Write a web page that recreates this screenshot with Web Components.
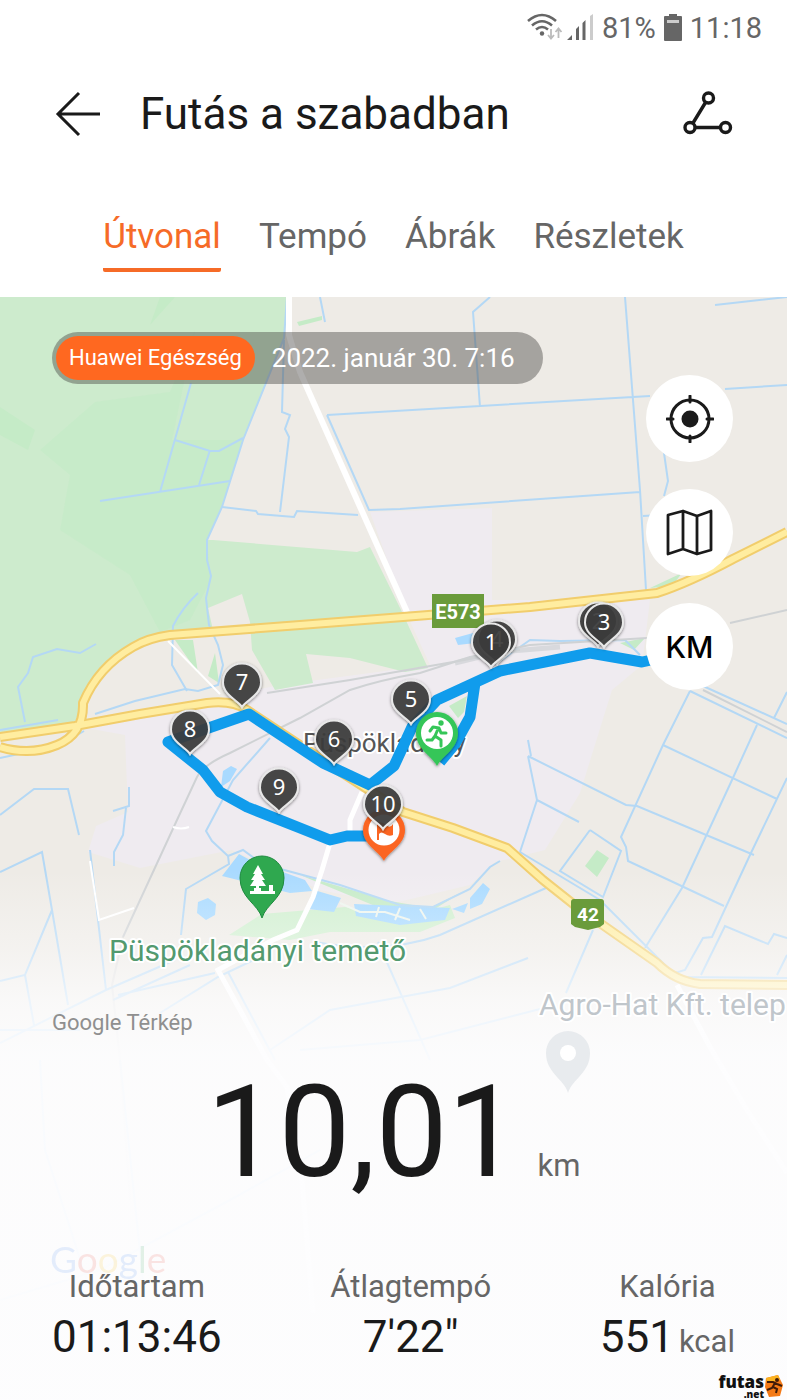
<!DOCTYPE html>
<html lang="hu">
<head>
<meta charset="utf-8">
<meta name="viewport" content="width=device-width, initial-scale=1">
<title>Futás a szabadban</title>
<style>
  html, body { margin: 0; }
  body { font-family: Roboto, "Liberation Sans", sans-serif; color: #1a1a1a; background: #fff; }
</style>
</head>
<body>
<workout-page></workout-page>

<template id="status-bar">
  <style>
    :host { display: flex; justify-content: flex-end; align-items: center; gap: 7px; height: 56px; padding: 0 25px; color: #666; font-size: 29px; line-height: 36px; }
    svg { display: block; flex: none; }
  </style>
  <svg width="68" height="30" viewBox="526 12 68 30" fill="none" stroke="#666" stroke-width="2.6" aria-label="Wi-Fi és mobil jel">
    <path d="M527 20Q541 8 555 20M531 24.500Q541 16 551 24.500M535 28.500Q541 23.500 547 28.500"/>
    <circle cx="541" cy="32.500" r="2.200" fill="#666" stroke="none"/>
    <path d="M550 28v9m-3-3 3 3.500 3-3.500M557.500 37v-9m-3 3 3-3.500 3 3.500" stroke="#bbb" stroke-width="1.800"/>
    <path d="M566 39l5-5v5zM575 28l3-3v14h-3zM581.500 22l3-3v20h-3z" fill="#666" stroke="none"/>
    <path d="M589 15l3-2v26h-3z" fill="#ccc" stroke="none"/>
  </svg>
  <span>81%</span>
  <svg width="20" height="28" viewBox="0 0 20 28" aria-label="Akkumulátor"><path d="M6 0h8v2h4q1 0 1 1v23q0 1-1 1H2q-1 0-1-1V3q0-1 1-1h4z" fill="#666"/><path d="M4 6h12v3H4z" fill="#ccc"/></svg>
  <span>11:18</span>
</template>

<template id="app-bar">
  <style>
    :host { display: flex; align-items: center; gap: 36px; height: 116px; padding: 0 53px 0 52px; }
    h1 { flex: 1; margin: 0; font-size: 44px; line-height: 56px; font-weight: 400; white-space: nowrap; }
    button { display: block; flex: none; border: 0; padding: 0; background: none; }
    svg { display: block; }
  </style>
  <button type="button" aria-label="Vissza"><svg width="52" height="52" viewBox="0 0 52 52" fill="none" stroke="#1a1a1a" stroke-width="3"><path d="M48 26H6M27 5 6 26l21 21"/></svg></button>
  <h1><slot></slot></h1>
  <button type="button" aria-label="Útvonal megosztása"><svg width="52" height="52" viewBox="682 88 52 52" fill="none" stroke="#1a1a1a" stroke-width="3.400"><circle cx="708.500" cy="98" r="5"/><circle cx="690" cy="127.500" r="5"/><circle cx="725.500" cy="127.500" r="5"/><path d="M705.500 102.500 693 123M695 127.500h25"/></svg></button>
</template>

<template id="page-tabs">
  <style>
    :host { display: flex; justify-content: center; gap: 38px; padding: 41px 0 25px; }
  </style>
  <slot></slot>
</template>

<template id="page-tab">
  <style>
    :host { display: block; }
    button { display: block; border: 0; border-bottom: 4px solid transparent; border-radius: 2px; margin: 0; padding: 0 0 7px; background: none; font: inherit; font-size: 35px; line-height: 48px; color: #666; white-space: nowrap; }
    :host([selected]) button { color: #f66b27; border-color: #f66b27; }
  </style>
  <button type="button" role="tab"><slot></slot></button>
</template>

<template id="source-chip">
  <style>
    :host { display: flex; align-items: center; gap: 17px; padding: 4px 28px 4px 4px; border-radius: 26px; background: rgba(70, 68, 66, .43); color: #fff; font-size: 26px; line-height: 44px; white-space: nowrap; }
    b { padding: 0 13px; border-radius: 22px; background: #ff6820; font-size: 22px; font-weight: 400; }
  </style>
  <b><slot name="source"></slot></b><slot></slot>
</template>

<template id="round-button">
  <style>
    :host { display: block; }
    button { display: grid; place-items: center; width: 87px; height: 87px; border: 0; border-radius: 50%; margin: 0; padding: 0; background: #fff; color: #000; font: 500 30px/40px Inter, Roboto, sans-serif; }
  </style>
  <button type="button"><slot></slot></button>
</template>

<template id="stat-item">
  <style>
    :host { display: grid; gap: 6px; justify-items: center; white-space: nowrap; }
    .label, small { font-size: 31px; line-height: 36px; color: #666; }
    .value { font-size: 44px; line-height: 52px; }
    small { margin-left: 5px; }
    small[hidden] { display: none; }
  </style>
  <span class="label"><slot name="label"></slot></span>
  <span class="value"><slot></slot><small><slot name="unit"></slot></small></span>
</template>

<template id="route-map">
  <style>
    :host { display: block; }
    svg { display: block; width: 100%; height: 100%; }
    text { font-family: Roboto, sans-serif; }
    .pin text { font: 22px "Noto Sans", Roboto, sans-serif; fill: #fff; text-anchor: middle; }
    .halo { paint-order: stroke; stroke: #fff; stroke-width: 4px; stroke-linejoin: round; }
  </style>
  <svg viewBox="0 297 787 1103" preserveAspectRatio="xMidYMid slice" role="img" aria-label="A futás útvonala a térképen">
    <defs>
      <linearGradient id="fade" gradientUnits="userSpaceOnUse" x1="0" y1="870" x2="0" y2="1400">
        <stop offset="0" stop-color="#fdfdfe" stop-opacity="0"/>
        <stop offset=".15" stop-color="#fdfdfe" stop-opacity=".4"/>
        <stop offset=".25" stop-color="#fdfdfe" stop-opacity=".76"/>
        <stop offset=".35" stop-color="#fdfdfe" stop-opacity=".93"/>
        <stop offset="1" stop-color="#fdfdfe" stop-opacity=".98"/>
      </linearGradient>
      <filter id="shade" x="-30%" y="-30%" width="160%" height="160%"><feDropShadow dx="0" dy="1" stdDeviation="1.500" flood-opacity=".5"/></filter>
      <path id="drop" d="M0 0C-3-6-19-12-19-24.500A19 19 0 0 1 19-24.500C19-12 3-6 0 0Z" fill="#3c3c3c" fill-opacity=".88" stroke="#e8e8e8" stroke-width="2"/>
      <path id="place" d="M0 0C-4-14-22-20-22-40A22 22 0 0 1 22-40C22-20 4-14 0 0Z"/>
      <path id="main-roads" d="M0 747Q30 756 57 745T83 703Q98 667 133 647 148 638 170 635L300 625 403 617 530 607 657 593Q690 582 733 559L787 532M0 737 75 726 140 714 207 703Q233 700 247 710L330 765 403 812 453 828 507 848 543 880 577 907 657 963Q675 981 700 984L787 985"/>
    </defs>
    <path fill="#eeebe6" d="M0 297h787v1103H0z"/>
    <path fill="#efebf0" d="M370 512 492 508V600L650 600 642 665 612 690 580 793 545 850 495 862 470 885 390 904 320 890 232 850 140 868 88 852 96 826 128 812 125 735 75 726 207 700 280 685 430 665 405 610Z"/>
    <path fill="#cdebcd" d="M0 297H287L284 338 243 440 222 507 207 540 213 540 357 552 370 547 402 612 428 668 405 672 350 658 306 654 313 683 275 690 252 650 250 622 242 594 208 608 213 630 165 636Q100 650 75 722L0 735Z"/>
    <g fill="#c5ebc7">
      <path d="M95 402 170 392 195 330 172 440 243 440 222 507 207 540 211 580 190 620 160 632 130 575 60 530 70 475 40 450Z" opacity=".7"/>
      <path d="M0 407 35 430 28 450 0 435ZM160 297H175L150 325ZM297 322 322 316 322 320 299 326Z"/>
      <path d="M175 640 193 640 198 673ZM215 653 219 683 208 676Z"/>
      <path d="M449 706 467 696 464 712 458 718ZM620 643 645 638 634 650ZM650 588 682 573 672 586ZM597 850 609 858 597 877 585 866Z"/>
      <path d="M229 935 262 914 345 907 400 918 450 905 455 918 420 932 330 932 290 940Z" fill="#d0efcf"/>
      <path d="M300 875 390 901 430 908 462 892 430 912 380 908Z"/>
    </g>
    <g fill="#a9daff">
      <path d="M239 854 250 860 305 880 312 891 290 893 222 876ZM314 890 341 898 334 912 308 909ZM354 904 450 908 445 920 400 925 356 916ZM452 909 468 903 464 913ZM470 898 483 883 490 889 482 904 470 909ZM198 902 208 898 216 904 215 915 206 920 197 913ZM223 771 231 766 237 769 230 781 221 787Z"/>
      <path d="M455 638 473 633 475 643 458 645Z"/>
    </g>
    <path d="M340 903 360 912 385 912 410 920M376 917 379 907M395 920 400 908M426 919 420 909" fill="none" stroke="#eef5ee" stroke-width="2"/>
    <g fill="none" stroke="#b4d8f5" stroke-width="2">
      <path d="M287 297 284 338 243 440 222 507 207 540 207 560 211 576 206 598 209 625 218 645 223 665 218 685 198 691 185 689 135 701 95 714"/>
      <path d="M191 383 160 492M175 440 210 451H219L243 438M210 450 199 485M100 501 230 481M222 507 256 511 258 514 294 517 297 511 358 515M280 512 289 437 285 429 290 415 282 412 284 340M320 297 325 322"/>
      <path d="M625 297 640 490 646 590M660 515 643 516M490 297 473 312 480 407M327 415 650 396M725 389 787 385M327 415 369 510 400 509 640 492M715 305 787 297M664 453 668 481 664 496"/>
      <path d="M198 593Q182 608 173 626L172 665 187 691M96 644 80 653 57 649 33 657 28 673 18 687 25 722M0 730 58 720M0 758 60 745 84 731"/>
      <path d="M0 815 34 789H68L79 835M129 787V806L113 811M126 808 123 835 114 852V866M270 738 233 780 206 831 212 841 228 856 229 864 186 889 181 935M228 856 243 850 262 864 340 885 400 905 433 907 470 889 490 867 500 861"/>
      <path d="M0 872 42 852 52 910 68 1005M52 910 25 975 0 981M25 975 34 1025M90 850 106 990M0 1043 106 990 175 960M113 1000 190 965M118 995 215 973M0 1030 80 1030M160 1013 218 977 262 956M228 972 275 1060M270 1050 330 1010 390 999 450 988 528 958M315 942Q385 955 440 935L546 888"/>
      <path d="M690 691 663 745 621 837 626 847 628 861 673 882 724 906M500 661 530 640 560 641 625 640 640 655"/>
      <path d="M528 756 626 805 637 806 754 855M528 756 537 800 520 852M537 800 579 822M663 745 777 799M757 725 732 780 682 888 645 948M787 778 750 855 712 937 703 938 685 970 675 973M690 691 787 738M703 686 787 724M787 692 774 718"/>
      <path d="M590 830 621 851 603 897 560 871 590 830M520 852 600 900 677 977 787 978M593 930 566 993M701 975 725 926 768 944 774 934 787 938M777 975 787 955M531 756 528 740M378 942 430 1060M300 1050 420 1040 540 1009M0 1300 100 1270 230 1200 320 1150M40 1060 45 1150 90 1290M120 1060 145 1300"/>
    </g>
    <g fill="none" stroke="#cfd2d4" stroke-width="2">
      <path d="M123 937 177 820 197 777Q203 765 230 753L300 718 350 690Q380 680 420 673L470 657 530 645 647 638M730 623 787 610M267 693 350 680 453 662 520 650M703 690 787 732"/>
      <path d="M455 663 500 652 560 647" stroke-width="5" opacity=".7"/>
      <path d="M123 937 112 985 120 1060 130 1200" opacity=".5"/>
    </g>
    <g fill="none" stroke="#fff">
      <path d="M289 297V335L300 372 357 500 407 612" stroke-width="6"/>
      <path d="M362 792 350 820 350 836M330 843 322 870 313 897 297 930 273 940 218 970 240 1010 267 1060 287 1087 302 1180 313 1313" stroke-width="5"/>
      <path d="M677 985 710 1047 747 1110 787 1173" stroke-width="5"/>
      <path d="M168 641 220 694M90 861 99 920 134 908M173 827Q181 830 189 827" stroke-width="2"/>
    </g>
    <g fill="none" stroke-linejoin="round">
      <use href="#main-roads" stroke="#f1cd6c" stroke-width="10"/>
      <use href="#main-roads" stroke="#ffeda0" stroke-width="6"/>
    </g>
    <text class="halo" x="303" y="752" font-size="26" fill="#555">Püspökladány</text>
    <path d="M0 870h787v530H0z" fill="url(#fade)"/>
    <path d="M440 762 455 744 470 717 475 683M665 657 642 662 590 653 500 671 437 700 412 727 394 766 370 785 323 763 270 728 249 714 168 742 203 770 220 792 247 807 300 828 330 840 347 836 385 836" fill="none" stroke="#109cec" stroke-width="11" stroke-linejoin="round"/>
    <path d="M432 594h52v34h-52z" fill="#6a9b3b"/>
    <text x="458" y="619" font-size="20" font-weight="700" fill="#fff" text-anchor="middle">E573</text>
    <path d="M574 899h27q3 0 3 3v22l-4 3-12 3-13-3-4-3v-22q0-3 3-3z" fill="#6a9b3b"/>
    <text x="588" y="921" font-size="19" font-weight="700" fill="#fff" text-anchor="middle">42</text>
    <g transform="translate(262 918)"><use href="#place" fill="#2fa84f" stroke="#1e8b3f"/><path d="M-4-53-9-44h2l-4 6h3l-4 6h6v2h-2v3H-12v3H13v-3H11v-6H7v6H-1v-3h-2v-2H4L0-38H3L-1-44H1z" fill="#fff"/></g>
    <text class="halo" x="109" y="961" font-size="30" fill="#539a6f">Püspökladányi temető</text>
    <g transform="translate(568 1093)"><use href="#place" fill="#e8ebee"/><circle cy="-40" r="8" fill="#fff"/></g>
    <text class="halo" x="539" y="1015" font-size="30" fill="#c0c6cb">Agro-Hat Kft. telep</text>
    <text x="50" y="1273" font-size="37" style="font-family: Lato, sans-serif" opacity=".13"><tspan fill="#4285f4">G</tspan><tspan fill="#ea4335">o</tspan><tspan fill="#fbbc05">o</tspan><tspan fill="#4285f4">g</tspan><tspan fill="#34a853">l</tspan><tspan fill="#ea4335">e</tspan></text>
    <g transform="translate(384 861)"><path d="M0 0C-4-9-21-16-21-31A21 21 0 0 1 21-31C21-16 4-9 0 0Z" fill="#fb6522" filter="url(#shade)"/><circle cy="-31" r="15.500" fill="#fff"/><path d="M-7-21V-38Q-2-40 2-36T9-37V-26Q5-24 1-27T-5-27V-21Z" fill="#fb6522"/></g>
    <g transform="translate(437 766)"><path d="M0 0C-4-9-21-17-21-33A21 21 0 0 1 21-33C21-17 4-9 0 0Z" fill="#35c658" filter="url(#shade)"/><circle cy="-33" r="16" fill="#fff"/><circle cx="4" cy="-43" r="2.700" fill="#35c658"/><path d="M-7-35-4-39 2-38 4-33 9-33M1-37-2-30 4-26 4-20M-2-30-5-26-10-26" fill="none" stroke="#35c658" stroke-width="3" stroke-linecap="round" stroke-linejoin="round"/></g>
    <g class="pin">
      <g transform="translate(497 664)"><use href="#drop" filter="url(#shade)"/><text y="-17">4</text></g>
      <g transform="translate(491 667)"><use href="#drop" filter="url(#shade)"/><text y="-17">1</text></g>
      <g transform="translate(598 646)"><use href="#drop" filter="url(#shade)"/><text y="-17">2</text></g>
      <g transform="translate(604 647)"><use href="#drop" filter="url(#shade)"/><text y="-17">3</text></g>
      <g transform="translate(411 724)"><use href="#drop" filter="url(#shade)"/><text y="-17">5</text></g>
      <g transform="translate(334 764)"><use href="#drop" filter="url(#shade)"/><text y="-17">6</text></g>
      <g transform="translate(242 707)"><use href="#drop" filter="url(#shade)"/><text y="-17">7</text></g>
      <g transform="translate(190 754)"><use href="#drop" filter="url(#shade)"/><text y="-17">8</text></g>
      <g transform="translate(279 812)"><use href="#drop" filter="url(#shade)"/><text y="-17">9</text></g>
      <g transform="translate(383 829)"><use href="#drop" filter="url(#shade)"/><text y="-17">10</text></g>
    </g>
  </svg>
</template>

<template id="site-mark">
  <style>
    :host { display: grid; grid-template-columns: auto 20px; align-items: center; justify-items: end; color: #111; font: 800 17px/16px "Open Sans", sans-serif; }
    small { font-size: 10px; line-height: 8px; }
    svg { grid-column: 2; grid-row: 1 / span 2; display: block; }
  </style>
  <span>futas</span>
  <svg width="20" height="24" viewBox="0 0 20 24"><path d="M2 4 14 1 19 11 16 22 5 23 1 13Z" fill="#f47a16"/><path d="M2 4 14 1 16 6 3 9Z" fill="#fbb321"/><path d="M3 8 9 8 13 10 18 12M11 9 8 14 3 16M9 13 13 15 12 19" fill="none" stroke="#401c08" stroke-width="2"/><circle cx="13" cy="6" r="2" fill="#401c08"/></svg>
  <small>.net</small>
</template>

<template id="workout-page">
  <style>
    :host { display: flex; flex-direction: column; min-height: 100vh; overflow: hidden; }
    main { flex: 1; position: relative; display: flex; flex-direction: column; }
    route-map { position: absolute; inset: 0; z-index: 0; }
    .tools { position: relative; display: flex; justify-content: space-between; align-items: flex-start; padding: 35px 54px 0 52px; }
    .buttons { display: grid; gap: 27px; margin-top: 43px; }
    .summary { position: relative; margin-top: auto; padding: 0 52px 37px; }
    .credit { margin: 0; font-size: 22px; line-height: 26px; color: #8f8f8f; }
    .distance { display: flex; justify-content: center; align-items: baseline; gap: 18px; margin: 17px 0 58px; font-size: 128px; line-height: 158px; }
    .distance small { font-size: 31px; line-height: 36px; color: #666; }
    .stats { display: flex; justify-content: space-between; }
    site-mark { position: absolute; right: 3px; bottom: 2px; }
  </style>
  <status-bar></status-bar>
  <app-bar>Futás a szabadban</app-bar>
  <page-tabs role="tablist"><page-tab selected>Útvonal</page-tab><page-tab>Tempó</page-tab><page-tab>Ábrák</page-tab><page-tab>Részletek</page-tab></page-tabs>
  <main>
    <route-map></route-map>
    <div class="tools">
      <source-chip><span slot="source">Huawei Egészség</span>2022. január 30. 7:16</source-chip>
      <div class="buttons">
        <round-button label="Saját hely"><svg width="48" height="48" viewBox="-24 -24 48 48" fill="none" stroke="#1a1a1a" stroke-width="3" stroke-linecap="round"><circle r="19"/><circle r="8.500" fill="#1a1a1a" stroke="none"/><path d="M0-23v6M0 17v6M-23 0h6M17 0h6"/></svg></round-button>
        <round-button label="Térképtípus"><svg width="48" height="48" viewBox="0 0 48 48" fill="none" stroke="#1a1a1a" stroke-width="2.800" stroke-linejoin="round"><path d="M2 6 17 2 31 7 45 2V41L31 45 17 40 2 45ZM17 2V40M31 7V45"/></svg></round-button>
        <round-button>KM</round-button>
      </div>
    </div>
    <section class="summary">
      <p class="credit">Google Térkép</p>
      <div class="distance"><span>10,01</span><small>km</small></div>
      <div class="stats">
        <stat-item><span slot="label">Időtartam</span>01:13:46</stat-item>
        <stat-item><span slot="label">Átlagtempó</span>7'22"</stat-item>
        <stat-item><span slot="label">Kalória</span>551<span slot="unit">kcal</span></stat-item>
      </div>
    </section>
    <site-mark></site-mark>
  </main>
</template>

<script>
  class TemplateElement extends HTMLElement {
    constructor() {
      super();
      const template = document.getElementById(this.localName);
      this.attachShadow({ mode: 'open' }).append(template.content.cloneNode(true));
    }
  }
  class PageTab extends TemplateElement {
    connectedCallback() {
      this.shadowRoot.querySelector('button').setAttribute('aria-selected', this.hasAttribute('selected'));
    }
  }
  class RoundButton extends TemplateElement {
    connectedCallback() {
      const label = this.getAttribute('label');
      if (label) this.shadowRoot.querySelector('button').setAttribute('aria-label', label);
    }
  }
  class StatItem extends TemplateElement {
    connectedCallback() {
      this.shadowRoot.querySelector('small').hidden = !this.querySelector('[slot=unit]');
    }
  }
  customElements.define('page-tab', PageTab);
  customElements.define('round-button', RoundButton);
  customElements.define('stat-item', StatItem);
  for (const name of ['status-bar', 'app-bar', 'page-tabs', 'source-chip', 'route-map', 'site-mark', 'workout-page']) {
    customElements.define(name, class extends TemplateElement {});
  }
</script>
</body>
</html>
